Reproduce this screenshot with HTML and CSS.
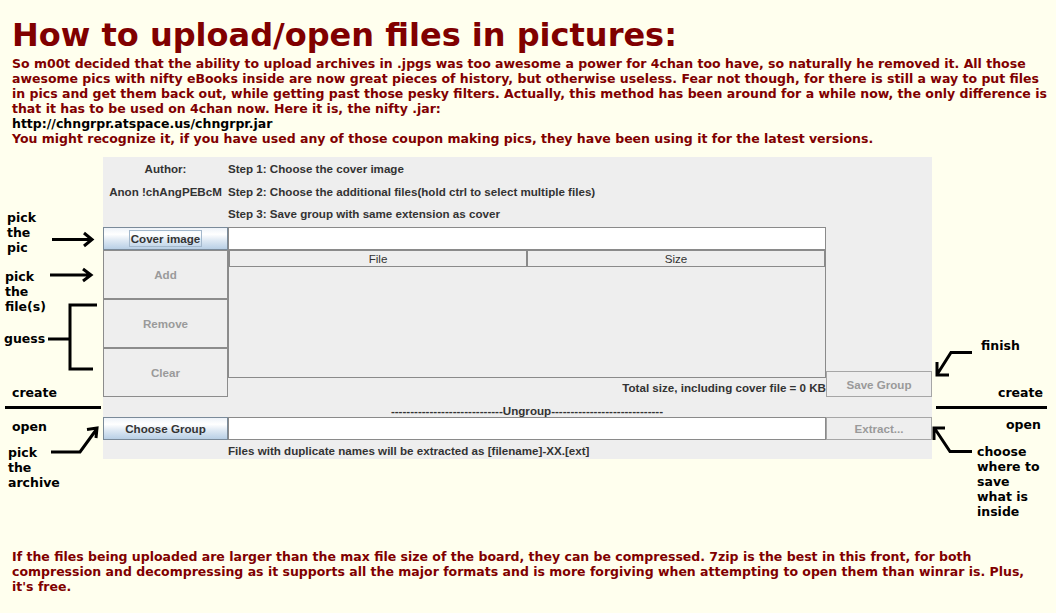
FILE: index.html
```html
<!DOCTYPE html>
<html>
<head>
<meta charset="utf-8">
<link rel="stylesheet" href="styles.css">
</head>
<body>
<h1 class="title">How to upload/open files in pictures:</h1>
<p class="intro">So m00t decided that the ability to upload archives in .jpgs was too awesome a power for 4chan too have, so naturally he removed it. All those<br>awesome pics with nifty eBooks inside are now great pieces of history, but otherwise useless. Fear not though, for there is still a way to put files<br>in pics and get them back out, while getting past those pesky filters. Actually, this method has been around for a while now, the only difference is<br>that it has to be used on 4chan now. Here it is, the nifty .jar:<br><span class="url">http://chngrpr.atspace.us/chngrpr.jar</span><br>You might recognize it, if you have used any of those coupon making pics, they have been using it for the latest versions.</p>

<section class="figure">
  <svg class="marks" width="1056" height="400" viewBox="0 157 1056 400">
    <g fill="none" stroke="#000" stroke-width="3">
      <path d="M52 239.5 H91 M84 233 L92 239.5 L84 246"/>
      <path d="M50 275 H90 M83 269 L91 275 L83 281"/>
      <path d="M48 339 H70 M97 305 H70 V369 H93"/>
      <path d="M5 407.5 H101"/>
      <path d="M51 452 H80 L96 430 M87 429.5 L97 428 L96 438"/>
      <path d="M972 352.5 H951 L938 373 M937 362 V375 H949"/>
      <path d="M936 407.5 H1047"/>
      <path d="M972 451.5 H950 L935 429 M945 428 H934 V440"/>
    </g>
  </svg>
  <div class="note n-pic">pick<br>the<br>pic</div>
  <div class="note n-files">pick<br>the<br>file(s)</div>
  <div class="note n-guess">guess</div>
  <div class="note n-create-l">create</div>
  <div class="note n-open-l">open</div>
  <div class="note n-archive">pick<br>the<br>archive</div>
  <div class="note n-finish">finish</div>
  <div class="note n-create-r">create</div>
  <div class="note n-open-r">open</div>
  <div class="note n-choose">choose<br>where to<br>save<br>what is<br>inside</div>

  <div class="app">
    <div class="head">
      <span class="lbl c">Author:</span><span class="lbl">Step 1: Choose the cover image</span>
      <span class="lbl c">Anon !chAngPEBcM</span><span class="lbl">Step 2: Choose the additional files(hold ctrl to select multiple files)</span>
      <span></span><span class="lbl">Step 3: Save group with same extension as cover</span>
    </div>
    <div class="grid">
      <button class="btn primary"><span class="focus">Cover image</span></button>
      <div class="field"></div>
      <div></div>

      <div class="stack">
        <button class="btn off">Add</button>
        <button class="btn off">Remove</button>
        <button class="btn off">Clear</button>
      </div>
      <div class="listcol">
        <div class="table">
          <div class="thead"><span class="th">File</span><span class="th">Size</span></div>
        </div>
        <div class="total">Total size, including cover file = 0 KB</div>
      </div>
      <div class="savecol"><button class="btn off side">Save Group</button></div>

      <div class="ungroup">-----------------------------Ungroup-----------------------------</div>

      <button class="btn primary">Choose Group</button>
      <div class="field"></div>
      <button class="btn off side">Extract...</button>

      <div class="hint">Files with duplicate names will be extracted as [filename]-XX.[ext]</div>
    </div>
  </div>
</section>

<p class="outro">If the files being uploaded are larger than the max file size of the board, they can be compressed. 7zip is the best in this front, for both<br>compression and decompressing as it supports all the major formats and is more forgiving when attempting to open them than winrar is. Plus,<br>it's free.</p>
</body>
</html>
```

FILE: styles.css
```css
html, body {
  margin: 0;
  padding: 0;
  background: #ffffee;
}

body {
  width: 1056px;
  height: 613px;
  overflow: hidden;
}

.title {
  margin: 17px 0 0;
  padding-left: 12px;
  font: bold 32px/36px "DejaVu Sans", sans-serif;
  color: #800000;
  white-space: nowrap;
}

.intro, .outro {
  margin: 3px 0 0;
  padding-left: 12px;
  font: bold 12.5px/15px "DejaVu Sans", sans-serif;
  color: #800000;
  white-space: nowrap;
}

.url {
  color: #000;
}

.outro {
  margin-top: 90px;
}

.figure {
  position: relative;
  margin-top: 11px;
  height: 302px;
  padding-left: 103px;
  display: flex;
}

.marks {
  position: absolute;
  left: 0;
  top: 0;
  pointer-events: none;
}

.note {
  position: absolute;
  font: bold 12.5px/15px "DejaVu Sans", sans-serif;
  color: #000;
  white-space: nowrap;
}

.n-pic { left: 7px; top: 53px; }
.n-files { left: 5px; top: 112px; }
.n-guess { left: 4px; top: 174px; }
.n-create-l { left: 12px; top: 228px; }
.n-open-l { left: 12px; top: 262px; }
.n-archive { left: 8px; top: 288px; }
.n-finish { left: 981px; top: 181px; }
.n-create-r { left: 998px; top: 228px; }
.n-open-r { left: 1006px; top: 260px; }
.n-choose { left: 977px; top: 287px; }

.app {
  width: 829px;
  height: 302px;
  background: #eeeeee;
  font: bold 11.6px/13px "Liberation Sans", Arial, sans-serif;
  color: #333333;
  display: flex;
  flex-direction: column;
}

.head {
  height: 70px;
  display: grid;
  grid-template-columns: 125px 1fr;
  grid-template-rows: 23px 22px 22px;
}

.lbl {
  display: flex;
  align-items: center;
  white-space: nowrap;
}

.lbl.c {
  justify-content: center;
}

.grid {
  display: grid;
  grid-template-columns: 125px 598px 106px;
  grid-template-rows: 23px 147px 20px 23px 19px;
}

.btn {
  font: inherit;
  margin: 0;
  padding: 0;
  box-sizing: border-box;
  display: flex;
  align-items: center;
  justify-content: center;
  border: 1px solid #7a8a99;
  color: #333333;
  white-space: nowrap;
}

.btn.primary {
  background: linear-gradient(to bottom, #eef3f9 0%, #ffffff 30%, #dde8f3 60%, #b8cfe5 100%);
}

.btn.off {
  background: #eeeeee;
  border-color: #8c8c8c;
  color: #9a9a9a;
}

.btn.side {
  border-color: #a6a6a6;
}

.focus {
  border: 1px solid #a3b8cc;
  padding: 1px;
}

.field {
  background: #ffffff;
  border: 1px solid #8a8a8a;
  box-sizing: border-box;
  height: 23px;
}

.stack {
  display: flex;
  flex-direction: column;
}

.stack .btn {
  height: 49px;
}

.listcol {
  display: flex;
  flex-direction: column;
}

.table {
  height: 128px;
  box-sizing: border-box;
  border: 1px solid #8a8a8a;
  border-top: none;
  background: #eeeeee;
}

.thead {
  display: grid;
  grid-template-columns: 298px 298px;
  height: 17px;
}

.th {
  box-sizing: border-box;
  border: 1px solid #8a8a8a;
  display: flex;
  align-items: center;
  justify-content: center;
  font-weight: normal;
  color: #333333;
}

.total {
  height: 19px;
  display: flex;
  align-items: center;
  justify-content: flex-end;
  white-space: nowrap;
}

.savecol {
  display: flex;
  flex-direction: column;
  justify-content: flex-end;
}

.savecol .btn {
  height: 26px;
}

.ungroup {
  grid-column: 1 / -1;
  padding: 0 106px 0 125px;
  display: flex;
  align-items: flex-end;
  justify-content: center;
  white-space: nowrap;
}

.hint {
  grid-column: 2 / span 2;
  display: flex;
  align-items: center;
  padding-top: 1px;
  white-space: nowrap;
}
```
